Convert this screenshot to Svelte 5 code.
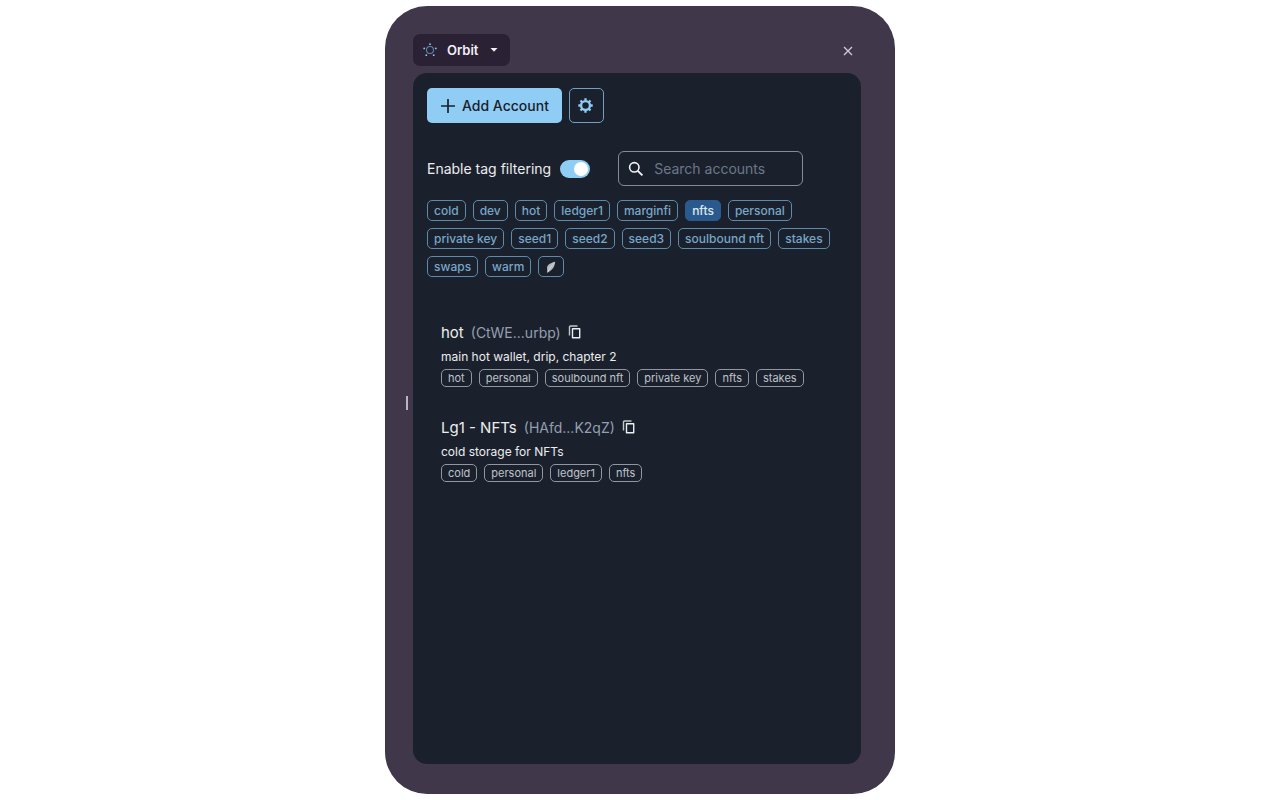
<script>
  const tags = ['cold', 'dev', 'hot', 'ledger1', 'marginfi', 'nfts', 'personal', 'private key', 'seed1', 'seed2', 'seed3', 'soulbound nft', 'stakes', 'swaps', 'warm'];
  const accounts = [
    { name: 'hot', address: '(CtWE...urbp)', note: 'main hot wallet, drip, chapter 2', tags: ['hot', 'personal', 'soulbound nft', 'private key', 'nfts', 'stakes'] },
    { name: 'Lg1 - NFTs', address: '(HAfd...K2qZ)', note: 'cold storage for NFTs', tags: ['cold', 'personal', 'ledger1', 'nfts'] }
  ];
  let selected = $state(['nfts']);
  let filtering = $state(true);
  let query = $state('');

  function toggle(tag) {
    selected = selected.includes(tag) ? selected.filter((t) => t !== tag) : [...selected, tag];
  }
</script>

<div class="frame">
  <div class="edge"><span class="grip"></span></div>
  <div class="window">
    <header>
      <button class="app-menu">
        <svg class="orbit" viewBox="0 0 14 14" width="14" height="14" aria-hidden="true">
          <circle cx="7" cy="7" r="3.5" fill="none" stroke="#5b87a8" stroke-width="1.1" />
          <g fill="#8ccbef">
            <circle cx="7" cy="1.2" r="0.9" />
            <circle cx="1.2" cy="5.4" r="0.9" />
            <circle cx="12.8" cy="5.4" r="0.9" />
            <circle cx="3.3" cy="12.2" r="0.9" />
            <circle cx="10.7" cy="12.2" r="0.9" />
          </g>
        </svg>
        <span>Orbit</span>
        <svg viewBox="0 0 8 4" width="8" height="4" aria-hidden="true"><path d="M.5 0h7L4 3.8z" fill="#f3eef6" /></svg>
      </button>
      <button class="close" aria-label="Close">
        <svg viewBox="0 0 10 10" width="10" height="10" aria-hidden="true"><path d="M1 1l8 8M9 1L1 9" stroke="#d3cbd9" stroke-width="1.3" /></svg>
      </button>
    </header>

    <main>
      <div class="actions">
        <button class="add">
          <svg viewBox="0 0 14 14" width="14" height="14" aria-hidden="true"><path d="M7 .6v12.8M.6 7h12.8" stroke="#1a202c" stroke-width="1.7" stroke-linecap="round" /></svg>
          Add Account
        </button>
        <button class="settings" aria-label="Settings">
          <svg viewBox="0 0 16 16" width="16" height="16" aria-hidden="true">
            <circle cx="7.500" cy="7.500" r="4.400" fill="none" stroke="#90cdf4" stroke-width="2.300" />
            <path d="M7.500 .3v2.200M7.500 12.500v2.200M.3 7.500h2.200M12.500 7.500h2.200M2.500 2.500L4 4M11 11l1.500 1.500M2.500 12.500L4 11M11 4l1.500-1.500" stroke="#90cdf4" stroke-width="2.300" />
          </svg>
        </button>
      </div>

      <div class="filters">
        <label class="switch">
          Enable tag filtering
          <input type="checkbox" role="switch" bind:checked={filtering} />
        </label>
        <label class="search">
          <svg viewBox="0 0 16 16" width="16" height="16" aria-hidden="true">
            <circle cx="6.300" cy="6.300" r="4.700" fill="none" stroke="#f1f3f5" stroke-width="1.600" />
            <path d="M9.800 9.800l4.600 4.600" stroke="#f1f3f5" stroke-width="1.900" />
          </svg>
          <input type="text" placeholder="Search accounts" aria-label="Search accounts" bind:value={query} />
        </label>
      </div>

      <div class="tags">
        {#each tags as tag}
          <button class="tag" class:on={selected.includes(tag)} onclick={() => toggle(tag)}>{tag}</button>
        {/each}
        <button class="tag" aria-label="Feather">
          <svg viewBox="0 0 12 14" width="12" height="14" aria-hidden="true">
            <path d="M10.200 1.800C6.500 2.600 2.400 4.600 2 7.600L2.200 10.800l.2 2L4.400 11.400C7.800 9.600 9.800 6.500 10.200 1.800z" fill="#b4b9be" />
            <path d="M9.800 2.600C7 5 4.200 8.500 2.600 12.300" fill="none" stroke="#dde0e3" stroke-width=".8" />
          </svg>
        </button>
      </div>

      <ul class="accounts">
        {#each accounts as account}
          <li>
            <div class="title">
              <h2>{account.name}</h2>
              <span class="address">{account.address}</span>
              <button class="copy" aria-label="Copy address of {account.name}">
                <svg viewBox="0 0 14 14" width="14" height="14" aria-hidden="true">
                  <path d="M9.500 1H2.500Q1.500 1 1.500 2v8.500" fill="none" stroke="#c3c6ca" stroke-width="1.400" />
                  <path d="M4.500 3.700h7.200v9H4.500z" fill="none" stroke="#eceef0" stroke-width="1.400" stroke-linejoin="round" />
                </svg>
              </button>
            </div>
            <p>{account.note}</p>
            <div class="labels">
              {#each account.tags as tag}<span class="label">{tag}</span>{/each}
            </div>
          </li>
        {/each}
      </ul>
    </main>
  </div>
</div>

<style>
  :global(body) { background: #fff; }
  .frame, .frame * { box-sizing: border-box; }
  .frame {
    display: grid;
    grid-template-columns: 28px minmax(0, 1fr);
    max-width: 510px;
    min-height: calc(100vh - 12px);
    margin: 6px auto;
    padding: 28px 34px 30px 0;
    border-radius: 42px;
    background: #40374b;
    color: #ebedef;
    font-family: Inter, "Liberation Sans", sans-serif;
    font-size: 14px;
  }
  button, input { font: inherit; color: inherit; margin: 0; padding: 0; border: 0; background: none; }
  button { cursor: pointer; }
  svg { display: block; flex: none; }
  .edge { display: flex; align-items: center; justify-content: flex-end; padding: 7px 5px 0 0; }
  .grip { width: 2px; height: 14px; background: #bbb5c0; }
  .window { display: flex; flex-direction: column; }
  header { display: flex; align-items: center; justify-content: space-between; padding: 0 8px 7px 0; }
  .app-menu {
    display: flex;
    align-items: center;
    gap: 12px;
    height: 32px;
    padding: 0 12px 0 10px;
    border-radius: 7px;
    background: #2a2135;
    color: #f3eef6;
    font-size: 13px;
    font-weight: 600;
  }
  .close { padding: 1px 0 0; }
  .orbit { margin-right: -2px; }
  main { flex: 1; padding: 15px 14px; border-radius: 14px; background: #1b212c; }
  .actions { display: flex; gap: 7px; }
  .add {
    display: flex;
    align-items: center;
    gap: 7px;
    height: 35px;
    padding: 0 13px 0 14px;
    border-radius: 5px;
    background: #90cdf4;
    color: #1a202c;
    font-weight: 500;
  }
  .settings {
    display: grid;
    place-items: center;
    width: 35px;
    height: 35px;
    border: 1px solid #6ea2c4;
    border-radius: 5px;
  }
  .filters { display: flex; flex-wrap: wrap; gap: 28px; margin-top: 28px; }
  .switch { display: flex; align-items: center; gap: 9px; }
  .switch input {
    appearance: none;
    display: flex;
    width: 30px;
    height: 18px;
    padding: 2px;
    border-radius: 9px;
    background: #4a5568;
  }
  .switch input::before { content: ""; width: 14px; height: 14px; border-radius: 50%; background: #fff; }
  .switch input:checked { justify-content: flex-end; background: #90cdf4; }
  .search {
    display: flex;
    align-items: center;
    gap: 10px;
    width: 185px;
    height: 35px;
    padding: 0 9px;
    border: 1px solid #858b98;
    border-radius: 6px;
  }
  .search input { flex: 1; min-width: 0; outline: 0; }
  .search input::placeholder { color: #6c778a; opacity: 1; }
  .tags { display: flex; flex-wrap: wrap; gap: 7px; margin-top: 14px; }
  .tag {
    display: flex;
    align-items: center;
    height: 21px;
    padding: 0 6px;
    border: 1px solid #5b8bad;
    border-radius: 5px;
    color: #76a7ca;
    font-size: 12px;
    font-weight: 500;
  }
  .tag.on { border-color: #2a5a8d; background: #2a5a8d; color: #dce8f2; }
  .accounts { display: grid; gap: 28px; margin: 43px 0 0; padding: 0 14px; list-style: none; }
  .title { display: flex; align-items: center; gap: 7px; height: 24px; }
  h2 { margin: 0; font-size: 15px; font-weight: 400; }
  .address { color: #949fb1; }
  p { margin: 4px 0; font-size: 12px; line-height: 17px; }
  .labels { display: flex; flex-wrap: wrap; gap: 7px; }
  .label {
    height: 18px;
    padding: 0 6px;
    border: 1px solid #9196a0;
    border-radius: 5px;
    color: #bfc3ca;
    font-size: 11px;
    font-weight: 400;
    line-height: 16px;
  }
</style>
